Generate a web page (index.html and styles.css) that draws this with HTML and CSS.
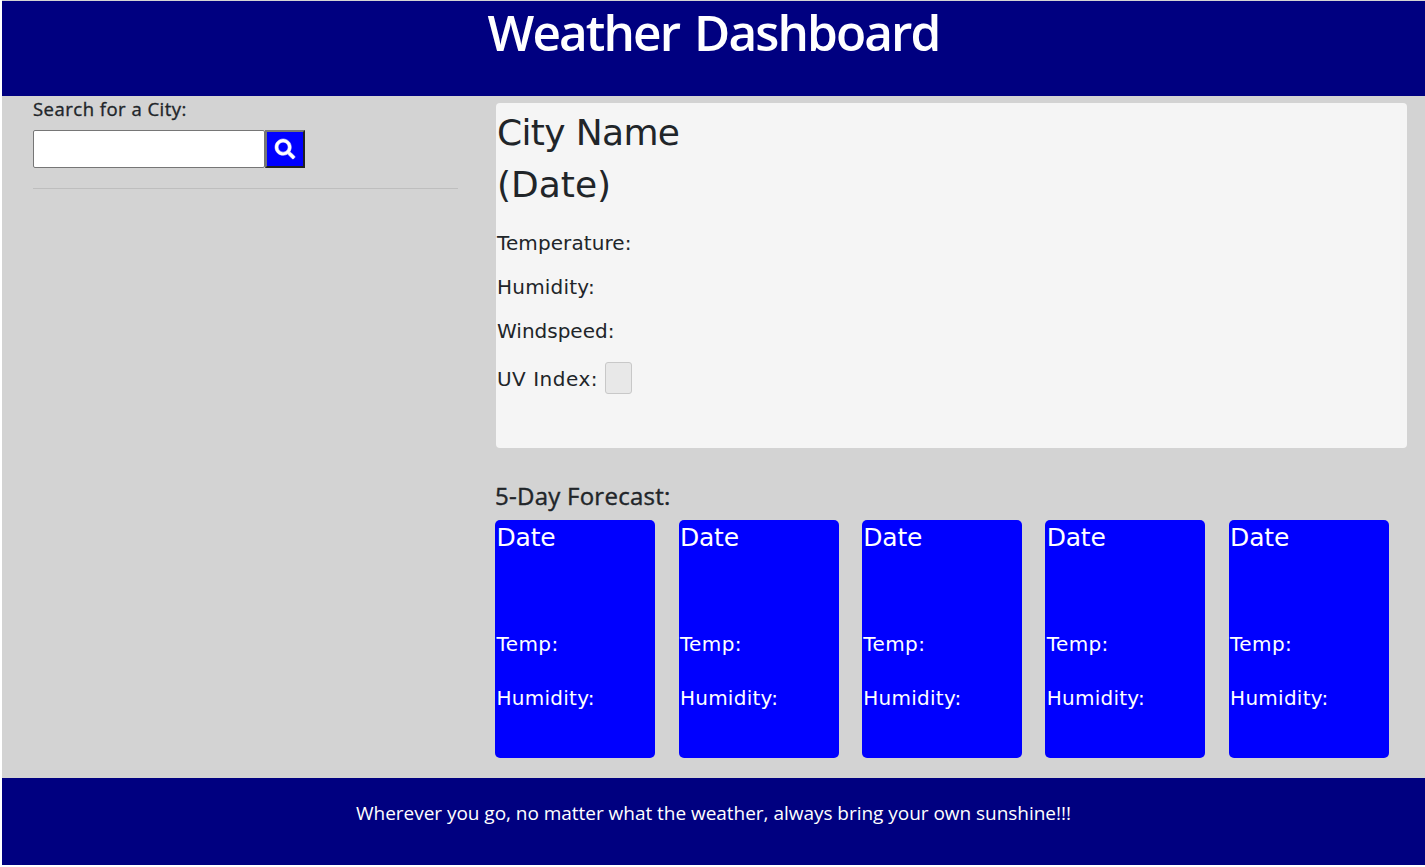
FILE: index.html
```html
<!DOCTYPE html>
<html lang="en">
<head>
<meta charset="utf-8">
<title>Weather Dashboard</title>
<link rel="stylesheet" href="styles.css">
</head>
<body>
<div class="page">
  <header class="header"><h1 class="title">Weather Dashboard</h1></header>
  <main class="main">
    <aside class="sidebar">
      <h2 class="search-label"><span>Search for a City:</span></h2>
      <form class="search">
        <input class="search-input" type="text" aria-label="City">
        <button class="search-button" type="button" aria-label="Search">
          <svg class="search-icon" viewBox="0 0 512 512"><path fill="#fff" stroke="#fff" stroke-width="14" d="M505 442.700 405.300 343c-4.500-4.500-10.600-7-17-7H372c27.600-35.300 44-79.700 44-128C416 93.100 322.900 0 208 0S0 93.100 0 208s93.100 208 208 208c48.300 0 92.700-16.400 128-44v16.300c0 6.400 2.500 12.500 7 17l99.700 99.700c9.400 9.400 24.600 9.400 33.900 0l28.300-28.300c9.400-9.400 9.400-24.600.1-34zM208 336c-70.700 0-128-57.200-128-128 0-70.700 57.200-128 128-128 70.700 0 128 57.200 128 128 0 70.700-57.200 128-128 128z"/></svg>
        </button>
      </form>
      <hr class="divider">
    </aside>
    <section class="content">
      <article class="current">
        <div class="city"><span class="city-name">City Name</span><br><span class="city-date">(Date)</span></div>
        <p class="stat stat-temperature"><span>Temperature:</span></p>
        <p class="stat stat-humidity"><span>Humidity:</span></p>
        <p class="stat"><span>Windspeed:</span></p>
        <p class="stat stat-uv"><span class="uv-label">UV Index:</span><span class="uv-badge"></span></p>
      </article>
      <h2 class="forecast-title"><span>5-Day Forecast:</span></h2>
      <div class="forecast">
        <article class="day"><h3 class="day-date">Date</h3><p class="day-temp">Temp:</p><p class="day-humidity">Humidity:</p></article>
        <article class="day"><h3 class="day-date">Date</h3><p class="day-temp">Temp:</p><p class="day-humidity">Humidity:</p></article>
        <article class="day"><h3 class="day-date">Date</h3><p class="day-temp">Temp:</p><p class="day-humidity">Humidity:</p></article>
        <article class="day"><h3 class="day-date">Date</h3><p class="day-temp">Temp:</p><p class="day-humidity">Humidity:</p></article>
        <article class="day"><h3 class="day-date">Date</h3><p class="day-temp">Temp:</p><p class="day-humidity">Humidity:</p></article>
      </div>
    </section>
  </main>
  <footer class="footer"><p class="quote">Wherever you go, no matter what the weather, always bring your own sunshine!!!</p></footer>
</div>
</body>
</html>
```
FILE: styles.css
```css
* { box-sizing: border-box; }
body {
  margin: 0;
  background: #fff;
  color: #212529;
  font-family: "Open Sans", "Noto Sans", sans-serif;
}
h1, h2, h3, p { margin: 0; white-space: nowrap; }
.page {
  height: 865px;
  margin-left: 2px;
  border-top: 1px solid #d3d3d3;
  display: flex;
  flex-direction: column;
}
.header { height: 95px; background: #000080; text-align: center; }
.title {
  color: #fff;
  font-size: 49.500px;
  font-weight: 600;
  line-height: 63px;
  letter-spacing: -1.9px;
  word-spacing: 4px;
}
.main { height: 682px; display: flex; background: #d3d3d3; }
.sidebar { width: 456px; padding-left: 31px; }
.search-label {
  height: 34px;
  font-size: 18.500px;
  font-weight: 500;
  line-height: 25px;
  letter-spacing: 0.480px;
  -webkit-text-stroke: 0.35px #212529;
}
.search { display: flex; height: 38px; }
.search-input {
  width: 232px;
  height: 38px;
  padding: 1px 2px;
  border: 1px solid #767676;
  border-radius: 2px;
  background: #fff;
}
.search-button {
  display: flex;
  align-items: center;
  justify-content: center;
  width: 40px;
  height: 38px;
  padding: 0 1px 0 0;
  border: 2px solid;
  border-color: #767676 #212121 #212121 #767676;
  background: #0000ff;
}
.search-icon { width: 20px; height: 20px; overflow: visible; }
.divider { margin: 20px 0 0; border: 0; border-top: 1px solid #bebebe; }
.content { flex: 1; padding: 7px 18px 0 37.100px; }
.current {
  height: 345px;
  margin-left: 0.900px;
  padding: 4px 1px;
  border-radius: 4px;
  background: #f5f5f5;
  font-family: "DejaVu Sans", sans-serif;
}
.city { height: 121px; font-size: 36px; line-height: 52px; }
.city-name { letter-spacing: -0.65px; }
.stat { height: 44px; font-size: 20px; line-height: 30px; }
.stat-temperature { letter-spacing: 0.1px; }
.stat-humidity { letter-spacing: 0.22px; }
.stat-uv { display: flex; align-items: center; gap: 7px; height: 32px; margin-top: 2px; letter-spacing: 0.5px; }
.uv-label { padding-top: 2px; }
.uv-badge {
  width: 27px;
  height: 32px;
  border: 1px solid #c8c8c8;
  border-radius: 3px;
  background: #e8e8e8;
}
.forecast-title {
  height: 72px;
  padding-top: 31px;
  font-size: 24px;
  font-weight: 500;
  line-height: 33px;
  letter-spacing: 0.25px;
  -webkit-text-stroke: 0.4px #212529;
}
.forecast { display: grid; grid-template-columns: repeat(5, 160px); column-gap: 23.420px; }
.day {
  height: 238px;
  padding: 2px 1.400px;
  border-radius: 5px;
  background: #0000ff;
  color: #fff;
  font-family: "DejaVu Sans", sans-serif;
}
.day-date { height: 107px; font-size: 25px; font-weight: 400; line-height: 31px; letter-spacing: -0.2px; }
.day-temp, .day-humidity { height: 54px; font-size: 20px; line-height: 30px; }
.day-temp { letter-spacing: 0.4px; }
.day-humidity { letter-spacing: 0.26px; }
.footer { flex: 1; background: #000080; text-align: center; color: #fff; }
.quote { padding-top: 20px; font-size: 19px; line-height: 30px; letter-spacing: -0.03px; }
```
